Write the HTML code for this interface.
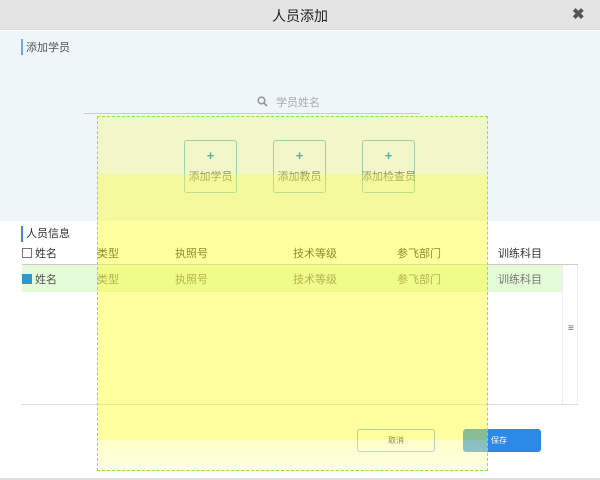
<!DOCTYPE html>
<html><head><meta charset="utf-8"><style>
*{margin:0;padding:0;box-sizing:border-box}
body{width:600px;height:480px;position:relative;overflow:hidden;background:#fff;font-family:"Liberation Sans","Noto Sans CJK SC",sans-serif;color:#333}
.a{position:absolute}
.t{font-size:11px;white-space:nowrap}
</style></head><body>
<div class="a" style="left:0;top:0;width:600px;height:30px;background:#e4e4e4;border-bottom:1px solid #ddd"></div>
<div class="a" style="left:0;top:6px;width:600px;text-align:center;font-size:14px;color:#222">人员添加</div>
<div class="a" style="left:572px;top:5px;font-size:15px;font-weight:bold;color:#555">✖</div>
<div class="a" style="left:0;top:31px;width:600px;height:190px;background:#eef6f9"></div>
<div class="a" style="left:21px;top:39px;width:2px;height:16px;background:#6aaaf0"></div>
<div class="a t" style="left:26px;top:39px;color:#555">添加学员</div>
<svg class="a" style="left:257px;top:96px" width="11" height="11" viewBox="0 0 11 11"><circle cx="4.5" cy="4.5" r="3.3" fill="none" stroke="#999" stroke-width="1.6"/><line x1="7" y1="7" x2="10" y2="10" stroke="#999" stroke-width="1.8"/></svg>
<div class="a t" style="left:276px;top:94px;color:#aaa">学员姓名</div>
<div class="a" style="left:84px;top:113px;width:336px;height:1px;background:#ccc"></div>
<div class="a" style="left:184px;top:140px;width:53px;height:53px;border:1px solid #8cc4d6;border-radius:3px"></div>
<div class="a" style="left:273px;top:140px;width:53px;height:53px;border:1px solid #8cc4d6;border-radius:3px"></div>
<div class="a" style="left:362px;top:140px;width:53px;height:53px;border:1px solid #8cc4d6;border-radius:3px"></div>
<div class="a" style="left:184px;top:148px;width:53px;text-align:center;font-size:13px;font-weight:bold;color:#3a9ad0">+</div>
<div class="a" style="left:273px;top:148px;width:53px;text-align:center;font-size:13px;font-weight:bold;color:#3a9ad0">+</div>
<div class="a" style="left:362px;top:148px;width:53px;text-align:center;font-size:13px;font-weight:bold;color:#3a9ad0">+</div>
<div class="a t" style="left:184px;top:168px;width:53px;text-align:center;color:#777">添加学员</div>
<div class="a t" style="left:273px;top:168px;width:53px;text-align:center;color:#777">添加教员</div>
<div class="a t" style="left:360px;top:168px;width:57px;text-align:center;color:#777">添加检查员</div>
<div class="a" style="left:21px;top:226px;width:2px;height:16px;background:#3a8ae0"></div>
<div class="a t" style="left:26px;top:225px;color:#333">人员信息</div>
<div class="a" style="left:22px;top:248px;width:10px;height:10px;border:1px solid #777"></div>
<div class="a t" style="left:35px;top:245px">姓名</div>
<div class="a t" style="left:97px;top:245px">类型</div>
<div class="a t" style="left:175px;top:245px">执照号</div>
<div class="a t" style="left:293px;top:245px">技术等级</div>
<div class="a t" style="left:397px;top:245px">参飞部门</div>
<div class="a t" style="left:498px;top:245px">训练科目</div>
<div class="a" style="left:22px;top:264px;width:556px;height:1px;background:#ccc"></div>
<div class="a" style="left:22px;top:265px;width:540px;height:27px;background:#e3fbd6"></div>
<div class="a" style="left:22px;top:274px;width:10px;height:10px;background:#2a9bd0"></div>
<div class="a t" style="left:35px;top:271px;color:#555">姓名</div>
<div class="a t" style="left:97px;top:271px;color:#777">类型</div>
<div class="a t" style="left:175px;top:271px;color:#777">执照号</div>
<div class="a t" style="left:293px;top:271px;color:#777">技术等级</div>
<div class="a t" style="left:397px;top:271px;color:#777">参飞部门</div>
<div class="a t" style="left:498px;top:271px;color:#777">训练科目</div>
<div class="a" style="left:562px;top:265px;width:1px;height:140px;background:#eee"></div>
<div class="a" style="left:577px;top:265px;width:1px;height:140px;background:#eee"></div>
<div class="a" style="left:568px;top:323px;font-size:10px;color:#666">≡</div>
<div class="a" style="left:22px;top:404px;width:556px;height:1px;background:#ddd"></div>
<div class="a" style="left:357px;top:429px;width:78px;height:23px;border:1px solid #7ab4e8;border-radius:3px;background:#fff;font-size:8px;text-align:center;line-height:21px;color:#333">取消</div>
<div class="a" style="left:463px;top:429px;width:78px;height:23px;border-radius:3px;background:#2b8ae8;font-size:8px;line-height:23px;padding-left:28px;color:#fff">保存</div>
<div class="a" style="left:0;top:478px;width:600px;height:2px;background:#e0e0e0"></div>
<div class="a" style="left:97px;top:116px;width:391px;height:355px;background:rgba(255,255,0,0.2);border:1px dashed #7ee85a"></div>
<div class="a" style="left:98px;top:174px;width:389px;height:266px;background:rgba(255,255,60,0.3)"></div>
<div class="a" style="left:98px;top:440px;width:389px;height:30px;background:linear-gradient(rgba(255,255,200,0.3),rgba(255,255,255,0.4))"></div>
</body></html>
